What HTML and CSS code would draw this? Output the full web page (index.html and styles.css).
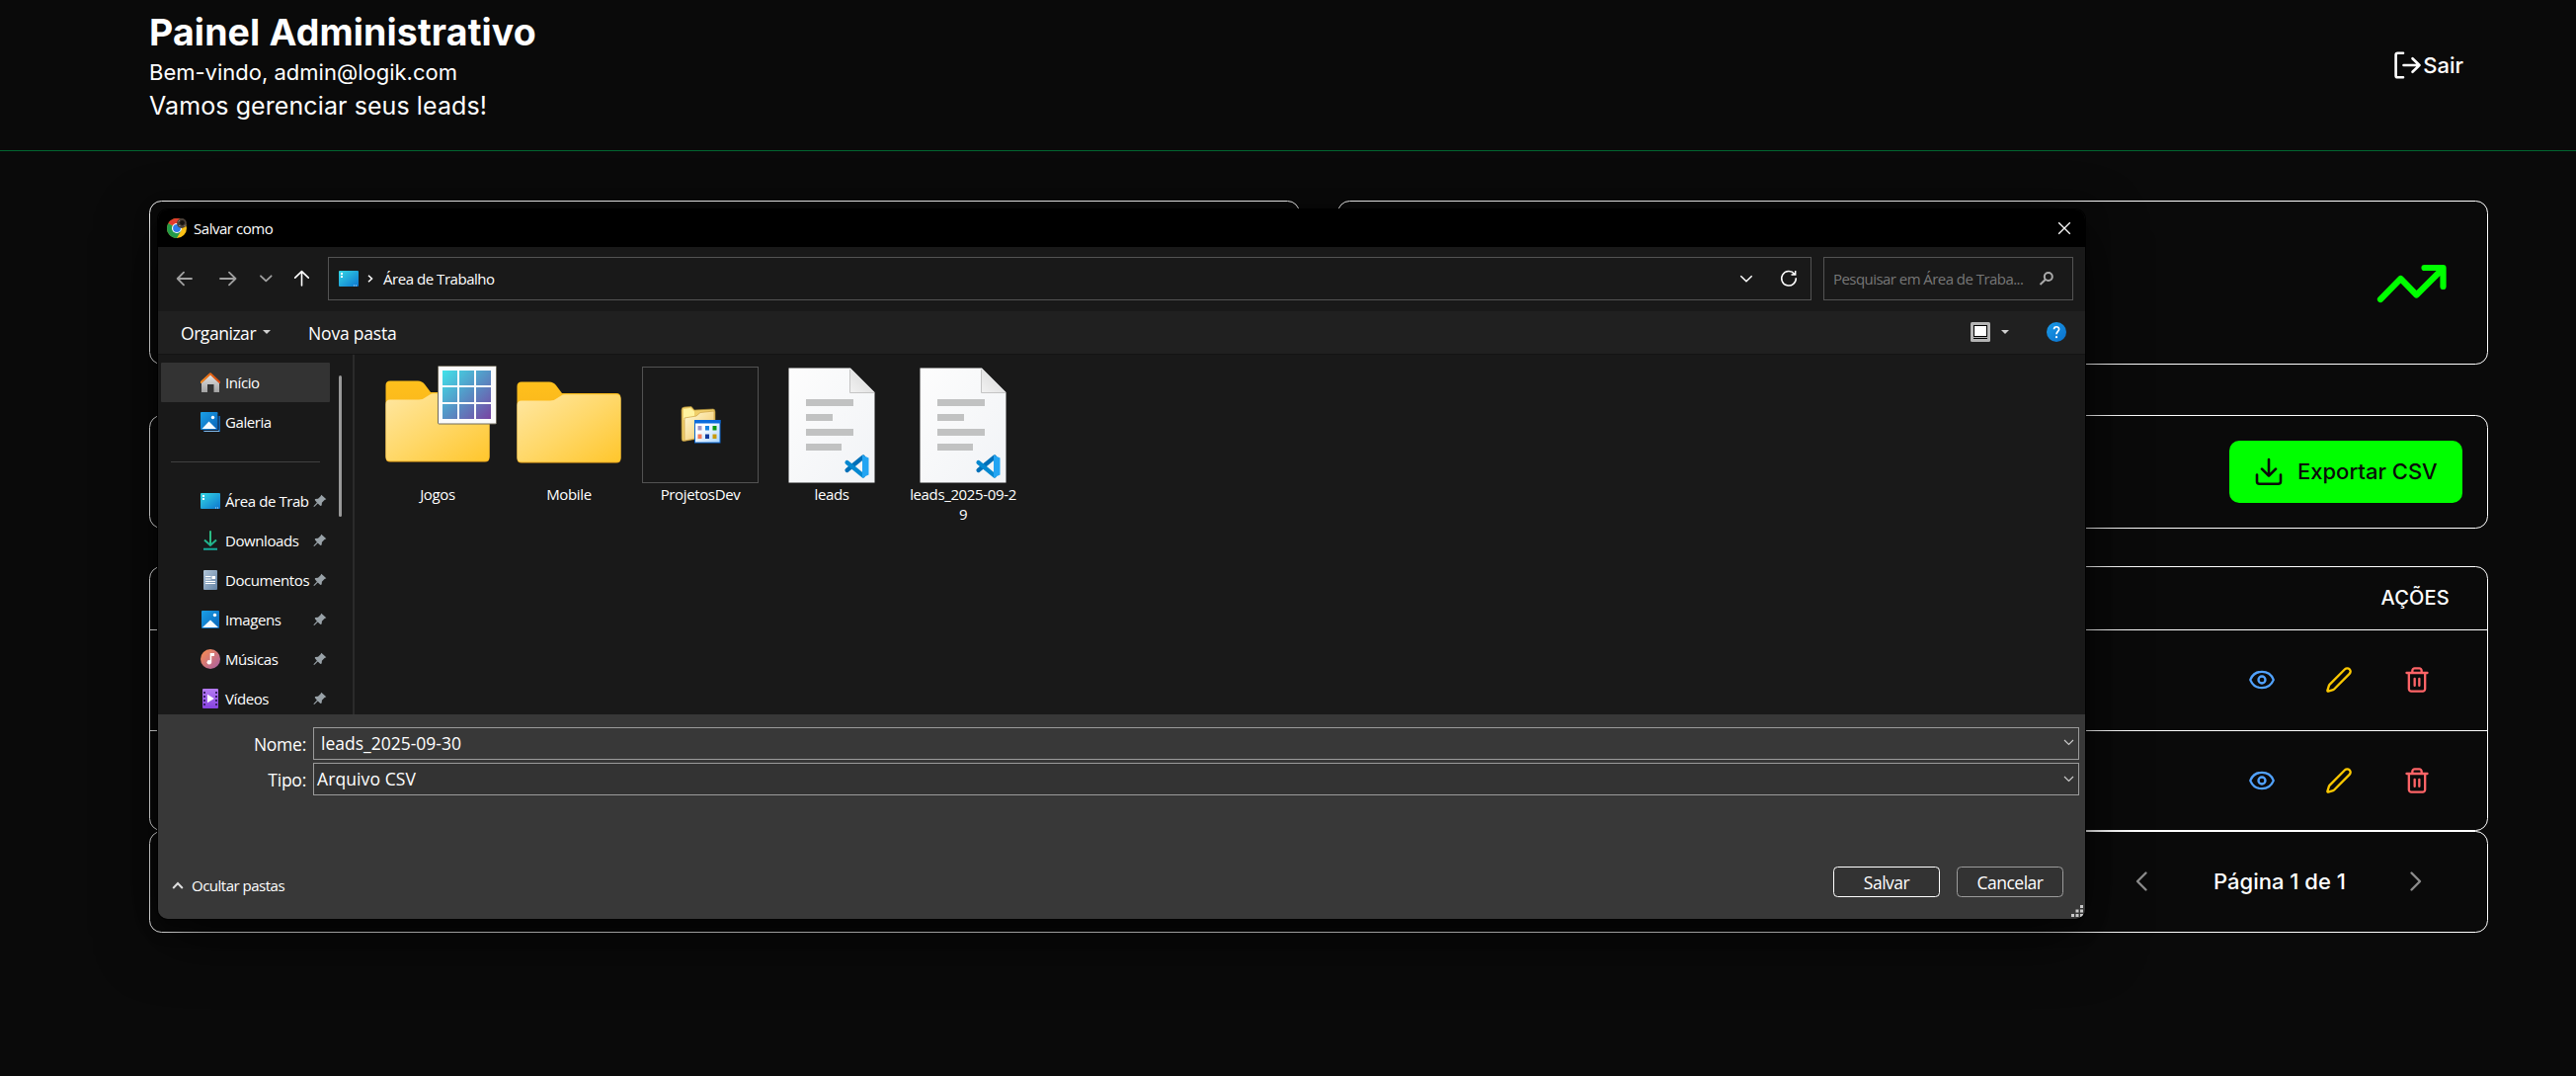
FILE: index.html
```html
<!DOCTYPE html>
<html lang="pt-BR">
<head>
<meta charset="utf-8">
<title>Painel Administrativo</title>
<link rel="stylesheet" href="styles.css">
</head>
<body>
<svg class="defs" width="0" height="0" aria-hidden="true">
  <defs>
    <linearGradient id="g-desk" x1="0" y1="0" x2="1" y2="1"><stop offset="0" stop-color="#35d8e4"/><stop offset="1" stop-color="#0c74cf"/></linearGradient>
    <linearGradient id="g-down" x1="0" y1="0" x2="0" y2="1"><stop offset="0" stop-color="#35c67d"/><stop offset="1" stop-color="#14a89a"/></linearGradient>
    <linearGradient id="g-doc" x1="0" y1="0" x2="1" y2="1"><stop offset="0" stop-color="#b3c6d8"/><stop offset="1" stop-color="#6383a6"/></linearGradient>
    <linearGradient id="g-img" x1="0" y1="0" x2="1" y2="1"><stop offset="0" stop-color="#1ba0e6"/><stop offset="1" stop-color="#0962b8"/></linearGradient>
    <linearGradient id="g-mus" x1="0" y1="0" x2="1" y2="1"><stop offset="0.1" stop-color="#f58a55"/><stop offset="1" stop-color="#a45ea6"/></linearGradient>
    <linearGradient id="g-vid" x1="0" y1="0" x2="0" y2="1"><stop offset="0" stop-color="#b57bf3"/><stop offset="1" stop-color="#8743e0"/></linearGradient>
    <linearGradient id="g-roof" x1="0" y1="0" x2="1" y2="0"><stop offset="0" stop-color="#f68b1f"/><stop offset="1" stop-color="#d8480f"/></linearGradient>
    <linearGradient id="g-wall" x1="0" y1="0" x2="0" y2="1"><stop offset="0" stop-color="#e4e4e4"/><stop offset="1" stop-color="#a2a2a2"/></linearGradient>
    <linearGradient id="g-folder" x1="0" y1="0" x2="1" y2="1"><stop offset="0" stop-color="#ffe7a2"/><stop offset="0.5" stop-color="#ffd869"/><stop offset="1" stop-color="#ffc62c"/></linearGradient>
    <linearGradient id="g-tab" x1="0" y1="0" x2="0" y2="1"><stop offset="0" stop-color="#ffc01c"/><stop offset="1" stop-color="#f0a91c"/></linearGradient>
    <linearGradient id="g-tiles" gradientUnits="userSpaceOnUse" x1="57" y1="5" x2="106" y2="54"><stop offset="0" stop-color="#40e4ea"/><stop offset="0.5" stop-color="#5594c6"/><stop offset="1" stop-color="#7845a3"/></linearGradient>
    <linearGradient id="g-page" x1="0" y1="0" x2="1" y2="1"><stop offset="0" stop-color="#fdfdfd"/><stop offset="1" stop-color="#f1f3f6"/></linearGradient>
    <linearGradient id="g-fold" x1="0" y1="1" x2="1" y2="0"><stop offset="0" stop-color="#f2f2f2"/><stop offset="1" stop-color="#d4d4d4"/></linearGradient>
    <linearGradient id="g-old" x1="0" y1="0" x2="1" y2="1"><stop offset="0" stop-color="#fffbd8"/><stop offset="1" stop-color="#f2c35e"/></linearGradient>
    <linearGradient id="g-help" x1="0" y1="0" x2="1" y2="1"><stop offset="0" stop-color="#1a9be8"/><stop offset="1" stop-color="#0a70cc"/></linearGradient>
    <linearGradient id="g-win" x1="0" y1="0" x2="1" y2="1"><stop offset="0.3" stop-color="#fff"/><stop offset="1" stop-color="#a8d4ff"/></linearGradient>
    <symbol id="eye" viewBox="0 0 24 24"><path d="M2.062 12.348a1 1 0 0 1 0-.696 10.75 10.75 0 0 1 19.876 0 1 1 0 0 1 0 .696 10.75 10.75 0 0 1-19.876 0"/><circle cx="12" cy="12" r="3"/></symbol>
    <symbol id="pencil" viewBox="0 0 24 24"><path d="M21.174 6.812a1 1 0 0 0-3.986-3.987L3.842 16.174a2 2 0 0 0-.5.83l-1.321 4.352a.5.5 0 0 0 .623.622l4.353-1.32a2 2 0 0 0 .83-.497z"/></symbol>
    <symbol id="trash" viewBox="0 0 24 24"><path d="M3 6h18M19 6v14c0 1-1 2-2 2H7c-1 0-2-1-2-2V6M8 6V4c0-1 1-2 2-2h4c1 0 2 1 2 2v2M10 11v6M14 11v6"/></symbol>
    <symbol id="pin" viewBox="0 0 14 14"><path d="M8.300.700 13.300 5.300 11.600 6 8.900 8.700 8.700 11.600 7.400 12 4.700 9.600 1.500 12.800.600 12.900.700 12 3.900 8.700 1.700 6.100 2.100 5 5 4.800 7.600 2.300Z" fill="#99a2a8"/></symbol>
    <symbol id="desk" viewBox="0 0 20 16"><rect width="20" height="16" rx="1" fill="url(#g-desk)"/><path d="M2 2h2v2H2zM2 5h2v2H2z" fill="#fff"/><path d="M15 14.500h1v1h-1zM17 14.500h1v1h-1z" fill="#cfe8ff"/></symbol>
    <symbol id="folder" viewBox="0 0 106 83"><path d="M.5 78V5Q.5.500 5 .500H33Q37.500.500 40 4L46 12H101Q105.500 12 105.500 17V78Q105.500 82.500 101 82.500H5Q.5 82.500.5 78Z" fill="url(#g-tab)"/><path d="M.5 77V24Q.5 19.500 5 19.500H34Q38 19.500 41 17L45 14.500Q46.500 13.300 49 13.300H101Q105.500 13.300 105.500 18V77Q105.500 81.500 101 81.500H5Q.5 81.500.5 77Z" fill="url(#g-folder)"/></symbol>
    <symbol id="page" viewBox="0 0 88 117"><path d="M.5.500H63L87.500 25V116.500H.5Z" fill="url(#g-page)"/><path d="M62.500.800V25.500H87.300Z" fill="url(#g-fold)"/><path d="M62.500 2V25.500H87" fill="none" stroke="#c4c4c4"/><path d="M18 32h48v7H18zM18 47h27v7H18zM18 62h48v7H18zM18 77h36v7H18z" fill="#c1c2c2"/><path d="M59.500 104 76 90.500" stroke="#0070b8" stroke-width="4.200" stroke-linecap="round"/><path d="M59.500 96 76 109.500" stroke="#0588d0" stroke-width="4.200" stroke-linecap="round"/><path d="M75 88.500 81.500 91.500V108.500L75 111.500Z" fill="#23a5f3"/></symbol>
  </defs>
</svg>

<header class="topbar">
  <div>
    <h1>Painel Administrativo</h1>
    <p class="welcome">Bem-vindo, admin@logik.com</p>
    <p class="tagline">Vamos gerenciar seus leads!</p>
  </div>
  <a class="logout"><svg width="30" height="30" viewBox="0 0 30 30"><path d="M11 2.700H5.500Q3.600 2.700 3.600 4.600V25.400Q3.600 27.300 5.500 27.300H11M11.500 15H27.500M20.500 8.200 27.500 15 20.500 21.800"/></svg>Sair</a>
</header>

<main>
  <section class="stats">
    <div class="card"></div>
    <div class="card trend"><svg width="72" height="42" viewBox="0 0 72 42"><path d="M4 37 24.500 16 40.500 32.500 67 6M48.500 5H67.500V24"/></svg></div>
  </section>
  <section class="card export">
    <button class="export-btn"><svg width="30" height="30" viewBox="0 0 30 30"><path d="M15 3V19.500M8 12.700 15 19.700 22 12.700M3 18.500V25.200Q3 27.700 5.500 27.700H24.500Q27 27.700 27 25.200V18.500"/></svg>Exportar CSV</button>
  </section>
  <section class="card leads">
    <div class="lead-head">AÇÕES</div>
    <div class="lead-row"><svg class="view"><use href="#eye"/></svg><svg class="edit"><use href="#pencil"/></svg><svg class="remove"><use href="#trash"/></svg></div>
    <div class="lead-row"><svg class="view"><use href="#eye"/></svg><svg class="edit"><use href="#pencil"/></svg><svg class="remove"><use href="#trash"/></svg></div>
  </section>
  <nav class="card pager">
    <svg width="14" height="22" viewBox="0 0 14 22"><path d="M11.500 2.500 3 11 11.500 19.500"/></svg>
    <span>Página 1 de 1</span>
    <svg width="14" height="22" viewBox="0 0 14 22"><path d="M2.500 2.500 11 11 2.500 19.500"/></svg>
  </nav>
</main>

<div class="dialog" role="dialog">
  <div class="titlebar">
    <svg width="20" height="20" viewBox="0 0 20 20"><circle cx="10" cy="10" r="10" fill="#fbc116"/><path d="M10 10 1.340 5A10 10 0 0 1 18.660 5Z" fill="#e33b2e"/><path d="M10 10 1.340 5A10 10 0 0 0 10 20L14.300 12.500Z" fill="#229a48"/><circle cx="10" cy="10" r="5" fill="#fff"/><circle cx="10" cy="10" r="3.900" fill="#2f7bea"/><circle cx="15" cy="5" r="4.900" fill="#4b4038"/><circle cx="15.500" cy="4.500" r="2.400" fill="#17120f"/><path d="M11.500 3.500 13 2M17.500 8 19 6.500M12 7.500h1.500" stroke="#94857b"/></svg>
    <span>Salvar como</span>
    <svg class="close" width="14" height="14" viewBox="0 0 14 14"><path d="M1.200 1.200 12.800 12.800M12.800 1.200 1.200 12.800" stroke="#fff" stroke-width="1.300"/></svg>
  </div>
  <div class="addressbar">
    <svg class="nav" width="140" height="20" viewBox="0 0 140 20"><g fill="none" stroke-width="1.800" stroke-linecap="round" stroke-linejoin="round"><path d="M18 10H4M10 3.700 3.700 10 10 16.300M47 10H62.500M56 3.700 62.500 10 56 16.300M88 7.300 93.300 12.300 98.600 7.300" stroke="#a0a0a0"/><path d="M129.500 17V3.200M122.700 9.200 129.500 2.700 136.300 9.200" stroke="#fff" stroke-width="1.600"/></g></svg>
    <div class="path">
      <svg width="20" height="16"><use href="#desk"/></svg>
      <svg class="crumb" width="6" height="8" viewBox="0 0 6 8"><path d="M1 .700 4.500 4 1 7.300"/></svg>
      <span>Área de Trabalho</span>
      <svg class="drop" width="14" height="8" viewBox="0 0 14 8"><path d="M1.300 1.300 7 6.700 12.700 1.300"/></svg>
      <svg class="refresh" width="18" height="18" viewBox="0 0 18 18"><path d="M14.700 4.200A7.300 7.300 0 1 0 16.300 8.300M15.700 1V5H11.500"/></svg>
    </div>
    <div class="search"><span>Pesquisar em Área de Traba...</span><svg width="16" height="16" viewBox="0 0 16 16"><circle cx="9.800" cy="6" r="4" fill="none" stroke="#aaa" stroke-width="2"/><path d="M6.700 9 1.500 14" stroke="#aaa" stroke-width="2"/></svg></div>
  </div>
  <div class="toolbar">
    <span>Organizar</span><i class="tri"></i><span class="newf">Nova pasta</span>
    <svg class="mode" width="20" height="20" viewBox="0 0 20 20"><rect width="20" height="20" rx="1.500" fill="#b4b4b4"/><path d="M3 3h14v12H3z" fill="#000"/><path d="M4 4h12v10H4z" fill="#fff"/><path d="M3 16h14v1H3z" fill="#000"/></svg>
    <i class="tri"></i>
    <svg class="help" width="20" height="20" viewBox="0 0 20 20"><circle cx="10" cy="10" r="10" fill="url(#g-help)"/><path d="M7.500 7.300C7.500 3.900 12.600 3.900 12.600 7.200 12.600 9.300 10 9.600 10 12.300" fill="none" stroke="#fff" stroke-width="1.700"/><circle cx="10" cy="15.200" r="1.100" fill="#fff"/></svg>
  </div>
  <div class="browser">
    <aside>
      <ul>
        <li class="on"><svg viewBox="0 0 20 20"><path d="M1 10.500 10 2 19 10.500V20H13.500V12H7V20H1Z" fill="url(#g-wall)"/><path d="M.7 9.800 10 1.300 19.300 9.800" fill="none" stroke="url(#g-roof)" stroke-width="2.200" stroke-linejoin="round" stroke-linecap="round"/></svg><span>Início</span></li>
        <li><svg viewBox="0 0 20 20"><path d="M3 4h17v16H3z" fill="#0d5fae"/><path d="M3 18.500h16v1.500H4z" fill="#7eb4e4"/><rect width="17.500" height="18" rx="1" fill="url(#g-img)"/><path d="M18 2v16.500H2" fill="none" stroke="#14253a"/><path d="M1.500 17 8.500 9.500 16 17Z" fill="#f3faff"/><circle cx="12.500" cy="5.500" r="1.700" fill="#fff"/></svg><span>Galeria</span></li>
        <li class="sep"></li>
        <li><svg viewBox="0 -2 20 20"><use href="#desk" width="20" height="16"/></svg><span>Área de Trab</span><svg class="pin"><use href="#pin"/></svg></li>
        <li><svg viewBox="0 0 20 20"><path d="M10 .500V14.500M4 9.500 10 15 16 9.500M3 18.800H17" fill="none" stroke="url(#g-down)" stroke-width="2"/><path d="M9 .5h2v14H9z" fill="#2bbb84"/></svg><span>Downloads</span><svg class="pin"><use href="#pin"/></svg></li>
        <li><svg viewBox="0 0 20 20"><rect x="3" width="14" height="20" rx="1" fill="url(#g-doc)"/><path d="M5 6.500h5.500M5 9h5.500M5 11.500h10M5 13.500h10" stroke="#fff" stroke-width="1.200"/><path d="M11.500 6h3.500v3h-3.500z" fill="#fff"/></svg><span>Documentos</span><svg class="pin"><use href="#pin"/></svg></li>
        <li><svg viewBox="0 0 20 20"><rect x="1" y="1" width="18" height="18" rx="1" fill="url(#g-img)"/><path d="M2 18 10 10.500 18 18Z" fill="#f3faff"/><circle cx="14.500" cy="5.500" r="1.700" fill="#fff"/></svg><span>Imagens</span><svg class="pin"><use href="#pin"/></svg></li>
        <li><svg viewBox="0 0 20 20"><circle cx="10" cy="10" r="10" fill="url(#g-mus)"/><circle cx="8.800" cy="13.300" r="2.300" fill="#fff"/><path d="M9.700 4H14V7H11.200V13H9.700Z" fill="#fff"/></svg><span>Músicas</span><svg class="pin"><use href="#pin"/></svg></li>
        <li><svg viewBox="0 0 20 20"><rect x="2" width="16" height="20" rx="1" fill="url(#g-vid)"/><path d="M4 3v15M16 3v15" stroke="#3b1f6b" stroke-width="2" stroke-dasharray="2 2"/><path d="M7 5.800 13.800 10 7 14.200Z" fill="#fff"/></svg><span>Vídeos</span><svg class="pin"><use href="#pin"/></svg></li>
      </ul>
      <i class="thumb"></i>
    </aside>
    <div class="files">
      <figure><div><svg class="jogos" width="113" height="98" viewBox="0 0 113 98"><use href="#folder" y="15" width="106" height="83"/><rect x="53.500" y=".5" width="59" height="58.500" rx="1" fill="#fbfbfb" stroke="#6f6a5c"/><path fill="url(#g-tiles)" d="M58 5h15v15H58zM75 5h15v15H75zM92 5h15v15H92zM58 22h15v15H58zM75 22h15v15H75zM92 22h15v15H92zM58 39h15v15H58zM75 39h15v15H75zM92 39h15v15H92z"/></svg></div><figcaption>Jogos</figcaption></figure>
      <figure><div><svg class="fold" width="106" height="83"><use href="#folder"/></svg></div><figcaption>Mobile</figcaption></figure>
      <figure><div class="frame"><svg width="41" height="38" viewBox="0 0 41 38"><path d="M1 4Q1 1 4 1L11 .500 14 4 33 3Q35 3 35 6V30L3 35.500Q1 35.500 1.200 33Z" fill="#f0cf6a" stroke="#a98a35" stroke-width=".7"/><path d="M3 3 10 2 14 5.500 14 12 3 14Z" fill="#fff4a0"/><path d="M4 12 16 10 20 6.500 34 5V29L4 35Z" fill="url(#g-old)" stroke="#cc9f42" stroke-width=".7"/><rect x="14.500" y="14.500" width="25.500" height="22.500" fill="url(#g-win)" stroke="#0a66cf"/><path d="M14 14h26.500v3.500H14z" fill="#0b6bdb"/><path d="M17.500 20h4v4.500h-4z" fill="#9c95c8"/><path d="M25 20h4v4.500h-4z" fill="#1483e2"/><path d="M32.500 20h4v4.500h-4z" fill="#0a9a12"/><path d="M17.500 28.500h4V33h-4z" fill="#f57b58"/><path d="M25 28.500h4V33h-4z" fill="#123a9c"/><path d="M32.500 28.500h4V33h-4z" fill="#c99a0c"/></svg></div><figcaption>ProjetosDev</figcaption></figure>
      <figure><div><svg width="88" height="117"><use href="#page"/></svg></div><figcaption>leads</figcaption></figure>
      <figure><div><svg width="88" height="117"><use href="#page"/></svg></div><figcaption>leads_2025-09-2<br>9</figcaption></figure>
    </div>
  </div>
  <div class="form">
    <label><b>Nome:</b><span class="field name">leads_2025-09-30<svg width="11" height="7" viewBox="0 0 11 7"><path d="M1 1 5.500 5.500 10 1"/></svg></span></label>
    <label><b>Tipo:</b><span class="field type">Arquivo CSV<svg width="11" height="7" viewBox="0 0 11 7"><path d="M1 1 5.500 5.500 10 1"/></svg></span></label>
    <div class="actions">
      <svg width="12" height="8" viewBox="0 0 12 8"><path d="M1.200 7 6 2 10.800 7" fill="none" stroke="#ddd" stroke-width="2"/></svg>
      <span class="hide">Ocultar pastas</span>
      <button class="save">Salvar</button>
      <button>Cancelar</button>
    </div>
  </div>
  <svg class="grip" width="12" height="12" viewBox="0 0 12 12"><path d="M9 0h3v3H9zM9 4.500h3v3H9zM4.500 4.500h3v3h-3zM9 9h3v3H9zM4.500 9h3v3h-3zM0 9h3v3H0z" fill="#c8c8c8"/></svg>
</div>
</body>
</html>
```
FILE: styles.css
```css
* { box-sizing: border-box; }
body {
  margin: 0;
  height: 1089px;
  overflow: hidden;
  background: #0a0a0a;
  color: #fff;
  font-family: Inter, "Liberation Sans", sans-serif;
}
.defs { position: absolute; }
svg { flex: none; }
h1, p, ul, figure { margin: 0; padding: 0; }
button { font: inherit; }

.topbar {
  height: 153px;
  padding: 10px 114px 0 151px;
  display: flex;
  justify-content: space-between;
  border-bottom: 1px solid #016630;
}
h1 { font-size: 37.5px; font-weight: 700; line-height: 45px; letter-spacing: 0.13px; }
.welcome { font-size: 22px; line-height: 37px; }
.tagline { font-size: 25px; line-height: 31px; letter-spacing: 0.09px; }
.logout {
  display: flex;
  align-items: center;
  height: 30px;
  margin-top: 41px;
  gap: 1px;
  font-size: 22px;
  font-weight: 500;
}
.logout svg, .export-btn svg { fill: none; stroke: currentColor; stroke-width: 2.6; stroke-linecap: round; stroke-linejoin: round; }

main { padding: 50px 89px 0 151px; }
.card { border: 1px solid #fff; border-radius: 12.5px; }
.stats { display: grid; grid-template-columns: 1fr 1fr; gap: 38px; margin-bottom: 51px; }
.stats .card { height: 166px; }
.trend { display: flex; justify-content: flex-end; align-items: center; padding-right: 40px; padding-top: 1px; }
.trend svg { fill: none; stroke: #0f0; stroke-width: 6.2; stroke-linecap: round; stroke-linejoin: round; }
.export { height: 115px; margin-bottom: 38px; display: flex; justify-content: flex-end; align-items: center; padding-right: 25px; }
.export-btn {
  display: flex;
  align-items: center;
  gap: 14px;
  width: 236px;
  height: 63px;
  padding: 0 0 1px 25px;
  border: 0;
  border-radius: 10px;
  background: #0f0;
  color: #0a0a0a;
  font-size: 22px;
  font-weight: 450;
}
.leads { height: 268px; }
.lead-head { height: 63px; padding-right: 38px; text-align: right; line-height: 63px; font-size: 20px; font-weight: 500; letter-spacing: 0.2px; }
.lead-row { height: 102px; border-top: 1px solid #fff; display: flex; justify-content: flex-end; align-items: center; gap: 50.7px; padding: 0 57px 1px 0; }
.lead-row svg { width: 28px; height: 28px; fill: none; stroke: currentColor; stroke-width: 2; stroke-linecap: round; stroke-linejoin: round; }
.view { color: #51a2ff; }
.edit { color: #fcc800; }
.remove { color: #ff6467; }
.pager { height: 103px; display: flex; justify-content: flex-end; align-items: center; padding: 0 65px 1px 0; font-size: 22px; font-weight: 450; }
.pager svg { fill: none; stroke: #8c8c8c; stroke-width: 2.4; stroke-linecap: round; stroke-linejoin: round; }
.pager span { width: 264px; text-align: center; padding-left: 2px; }

.dialog {
  position: absolute;
  left: 160px;
  top: 212px;
  width: 1951px;
  height: 718px;
  display: flex;
  flex-direction: column;
  overflow: hidden;
  border-radius: 10px;
  background: #191919;
  box-shadow: 0 0 0 1px #000, 0 20px 60px rgba(0, 0, 0, 0.6), 0 4px 24px rgba(0, 0, 0, 0.3);
  font-family: "Open Sans", "Noto Sans", sans-serif;
  font-size: 15px;
  letter-spacing: -0.46px;
}
.titlebar { height: 38px; display: flex; align-items: center; gap: 7px; padding: 0 14px 0 9px; background: #000; }
.close { margin-left: auto; }
.addressbar { height: 65px; display: flex; padding: 10px 12px 0 16px; }
.nav { margin: 12px 16px 0 0; }
.path, .search { height: 44px; border: 1px solid #535353; display: flex; align-items: center; }
.path { width: 1502px; padding: 0 13px 1px 10px; margin-right: 12px; }
.path svg:not(:first-child) { fill: none; stroke: #fff; stroke-width: 1.5; }
.crumb { margin: 0 10px 0 9px; }
.drop { margin-left: auto; margin-right: 27px; }
.search { width: 253px; padding: 0 18px 0 9px; justify-content: space-between; color: #777; letter-spacing: -0.55px; }
.toolbar { height: 43px; display: flex; align-items: center; padding: 0 19px 0 23px; background: #202020; font-size: 17.5px; }
.tri { border: 4.500px solid transparent; border-top-color: #d0d0d0; border-bottom: 0; margin: 0 0 2px 7px; }
.newf { margin-left: 38px; letter-spacing: -0.2px; }
.mode { margin: 0 4px 2px auto; }
.help { margin: 0 0 2px 38px; }

.browser { height: 365px; display: flex; border-top: 1px solid #141414; }
aside { width: 199px; display: flex; border-right: 2px solid #2b2b2b; padding: 8px 0 0 3px; overflow: hidden; }
ul { width: 171px; list-style: none; }
li { height: 40px; display: flex; align-items: center; padding: 0 3px 0 40px; }
li > svg { width: 20px; height: 20px; margin-right: 5px; }
li span { width: 86px; white-space: nowrap; letter-spacing: -0.42px; }
li .pin { width: 14px; height: 14px; margin: 0 0 0 3px; }
.on { background: #333; border-radius: 1px; }
.sep::before { content: ""; width: 151px; height: 1px; margin-left: -30px; flex: none; background: #404040; }
.thumb { width: 3px; height: 143px; margin: 13px 0 0 9px; background: #999; border-radius: 2px; }
.files { display: flex; padding: 12px 0 0 17.500px; }
figure { width: 133px; text-align: center; line-height: 20px; letter-spacing: -0.36px; }
figure > div { width: 118px; height: 118px; margin: 0 auto 1px; display: flex; justify-content: center; align-items: center; }
.jogos { margin: -22px 0 0 7px; }
.fold { margin-top: -6px; }
.frame { border: 1px solid #525252; }

.form { flex: 1; background: #383838; padding-top: 13px; font-size: 17.5px; letter-spacing: 0; }
label { display: flex; align-items: center; height: 33px; margin-bottom: 3px; }
label b { width: 150px; margin-right: 7px; font-weight: 400; text-align: right; letter-spacing: -0.25px; }
.field { width: 1788px; height: 33px; display: flex; align-items: center; justify-content: space-between; padding: 0 4px 1px 8px; border: 1px solid #9b9b9b; }
.name { padding-left: 7px; padding-bottom: 2px; }
.field svg { fill: none; stroke: #ccc; stroke-width: 1.1; }
.type { padding-left: 3px; background: #333; letter-spacing: 0.1px; }
.actions { display: flex; align-items: center; margin-top: 72px; padding: 0 22px 0 14px; height: 31px; }
.hide { font-size: 15px; margin: 6px auto 0 8px; letter-spacing: -0.5px; }
.actions svg { margin-top: 6px; }
.actions button { width: 108px; height: 31px; padding: 0; margin-left: 17px; border: 1px solid #9b9b9b; border-radius: 4.500px; background: #333; color: #fff; letter-spacing: -0.5px; line-height: 28px; }
.actions .save { border-color: #fff; }
.grip { position: absolute; right: 2px; bottom: 2px; }
```
